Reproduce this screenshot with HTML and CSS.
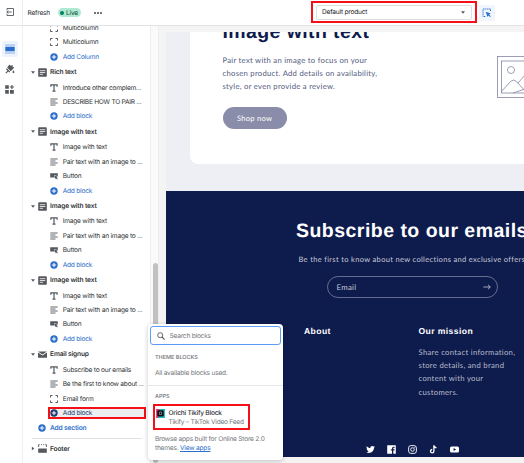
FILE: index.html
```
<!DOCTYPE html>
<html lang="en">
<head>
<meta charset="utf-8">
<title>Theme editor</title>
<link rel="stylesheet" href="styles.css">
</head>
<body>
<svg class="defs" width="0" height="0">
  <symbol id="corners" viewBox="0 0 8 8"><path d="M.5 2.500v-2h2M5.500 .5h2v2M7.500 5.500v2h-2M2.500 7.500h-2v-2" fill="none" stroke="#55585c"/></symbol>
  <symbol id="plus" viewBox="0 0 8 8"><circle cx="4" cy="4" r="3.700" fill="currentColor"/><path d="M4 1.900v4.200M1.900 4h4.200" stroke="#fff" stroke-width="1"/></symbol>
  <symbol id="title" viewBox="0 0 8 8"><path d="M.9 2.700V.9h6.200v1.800M4 .9v6.300M2.500 7.200h3" fill="none" stroke="#55585c" stroke-width="1.200"/></symbol>
  <symbol id="lines" viewBox="0 0 8 8"><path d="M.3 1h7.400M.3 3h5.200M.3 5h7.400M.3 7h5.200" stroke="#55585c" stroke-width=".9"/></symbol>
  <symbol id="button" viewBox="0 0 8 8"><path d="M.2 1.300h7.600v2.900L4.200 2.900l.6 2.700H.2z" fill="#55585c"/><path d="M4.600 3.600l3.300 1.200-1.200.7 1.100 1.300-.7.7-1.200-1.200-.6 1z" fill="#55585c"/></symbol>
  <symbol id="section" viewBox="0 0 9 9"><rect x=".2" y=".2" width="8.600" height="8.600" rx=".9" fill="#55585c"/><path d="M1.800 2.700h5.400M1.800 4.500h5.400M1.800 6.300h3.200" stroke="#fff" stroke-width=".8"/></symbol>
  <symbol id="mail" viewBox="0 0 9 9"><path d="M0 1.500h9L4.500 4.600z M0 2.400l4.500 3.100L9 2.400V7.700H0z" fill="#55585c"/></symbol>
  <symbol id="footer" viewBox="0 0 9 9"><path d="M.6 3V.6h1M3 .6h1M5.200 .6h1M7.400 .6h1V3" fill="none" stroke="#55585c" stroke-width=".9"/><path d="M.2 4.500h8.600V8.800H.2z" fill="#55585c"/></symbol>
  <symbol id="down" viewBox="0 0 4 3"><path d="M0 .2h4L2 2.800z" fill="#55585c"/></symbol>
</svg>

<header class="topbar">
  <div class="exit"><svg width="8" height="8" viewBox="0 0 8 8"><path d="M1 2.200V.5h6.500v7H1V5.800M5.700 4H.7M2.400 2.500L.8 4l1.600 1.500" fill="none" stroke="#55585c" stroke-width=".9"/></svg></div>
  <span class="theme">Refresh</span>
  <span class="live"><i></i>Live</span>
  <span class="more"><i></i><i></i><i></i></span>
  <div class="picker"><div class="select"><span>Default product</span><svg width="4" height="3"><use href="#down"/></svg></div></div>
  <div class="inspect"><svg width="10" height="10" viewBox="0 0 10 10"><path d="M8.500 3V1H1v7.500h2.500" fill="none" stroke="#2c6ecb" stroke-dasharray="1.300 .7"/><path d="M3.800 3.800l5 1.800-1.700 1 1.700 1.700-.8.8-1.700-1.700-.9 1.600z" fill="#2c6ecb"/></svg></div>
</header>

<div class="workspace">
  <nav class="rail">
    <div class="tool active"><svg width="10" height="10" viewBox="0 0 10 10"><path d="M.5 1h9M.5 9h9" stroke="#2c6ecb" stroke-width="1.100" stroke-dasharray="1 1"/><path d="M.3 2.700h9.400v4.600H.3z" fill="#2c6ecb"/></svg></div>
    <div class="tool"><svg width="10" height="10" viewBox="0 0 10 10"><path d="M4.400 .4l1.200 1.400L7.800.9l-.3 2 1.900.7-3.700 3.700L2.200 3.500zM1.700 4.100l3.500 3.600-1 .8-1-1L1.300 9.500.4 8.700l2-1.900-1.200-1.400zM8.300 6.200c1 1.300 1.300 2 .9 2.600-.5.500-1.600.3-1.700-.6 0-.6.400-1.200.8-2z" fill="#55585c"/></svg></div>
    <div class="tool"><svg width="9" height="9" viewBox="0 0 9 9"><path d="M.2 .2h3.600v3.600H.2zM.2 5h3.600v3.800H.2zM5 5h3.800v3.800H5zM6.300 0h1.200v1.400H9v1.200H7.500V4H6.300V2.600H4.800V1.400h1.500z" fill="#55585c"/></svg></div>
  </nav>

  <aside class="sidebar">
    <div class="tree">
      <div class="row"><svg><use href="#corners"/></svg><span>Multicolumn</span></div>
      <div class="row"><svg><use href="#corners"/></svg><span>Multicolumn</span></div>
      <div class="row add"><svg><use href="#plus"/></svg><span>Add Column</span></div>

      <div class="head"><svg class="caret"><use href="#down"/></svg><svg><use href="#section"/></svg><span>Rich text</span></div>
      <div class="row"><svg><use href="#title"/></svg><span>Introduce other complem...</span></div>
      <div class="row caps"><svg><use href="#lines"/></svg><span>DESCRIBE HOW TO PAIR ...</span></div>
      <div class="row add"><svg><use href="#plus"/></svg><span>Add block</span></div>

      <div class="head"><svg class="caret"><use href="#down"/></svg><svg><use href="#section"/></svg><span>Image with text</span></div>
      <div class="row"><svg><use href="#title"/></svg><span>Image with text</span></div>
      <div class="row"><svg><use href="#lines"/></svg><span>Pair text with an image to ...</span></div>
      <div class="row"><svg><use href="#button"/></svg><span>Button</span></div>
      <div class="row add"><svg><use href="#plus"/></svg><span>Add block</span></div>

      <div class="head"><svg class="caret"><use href="#down"/></svg><svg><use href="#section"/></svg><span>Image with text</span></div>
      <div class="row"><svg><use href="#title"/></svg><span>Image with text</span></div>
      <div class="row"><svg><use href="#lines"/></svg><span>Pair text with an image to ...</span></div>
      <div class="row"><svg><use href="#button"/></svg><span>Button</span></div>
      <div class="row add"><svg><use href="#plus"/></svg><span>Add block</span></div>

      <div class="head"><svg class="caret"><use href="#down"/></svg><svg><use href="#section"/></svg><span>Image with text</span></div>
      <div class="row"><svg><use href="#title"/></svg><span>Image with text</span></div>
      <div class="row"><svg><use href="#lines"/></svg><span>Pair text with an image to ...</span></div>
      <div class="row"><svg><use href="#button"/></svg><span>Button</span></div>
      <div class="row add"><svg><use href="#plus"/></svg><span>Add block</span></div>

      <div class="head"><svg class="caret"><use href="#down"/></svg><svg><use href="#mail"/></svg><span>Email signup</span></div>
      <div class="row"><svg><use href="#title"/></svg><span>Subscribe to our emails</span></div>
      <div class="row"><svg><use href="#lines"/></svg><span>Be the first to know about ...</span></div>
      <div class="row"><svg><use href="#corners"/></svg><span>Email form</span></div>
      <div class="row add selected"><svg><use href="#plus"/></svg><span>Add block</span></div>
      <div class="head add-section"><svg><use href="#plus"/></svg><span>Add section</span></div>
      <hr>
      <div class="head"><svg class="caret closed"><use href="#down"/></svg><svg><use href="#footer"/></svg><span>Footer</span></div>
    </div>
  </aside>
  <div class="scrollbar"><div class="thumb"></div></div>

  <main class="stage">
    <div class="preview">
      <section class="feature">
        <div class="card">
          <div class="copy">
            <h2>Image with text</h2>
            <p>Pair text with an image to focus on your<br>chosen product. Add details on availability,<br>style, or even provide a review.</p>
            <span class="shop">Shop now</span>
          </div>
          <svg class="placeholder" width="60" height="42" viewBox="0 0 60 42"><g fill="none" stroke="#8286a3" stroke-width=".8"><rect x=".5" y=".5" width="58" height="41"/><rect x="4.500" y="5" width="50" height="32"/><circle cx="14" cy="14" r="3.500"/><path d="M4.500 35.500l9-10q3-3 6 0l9 10M21 27l7-8q3-2 6 0l14 16M16 37l12-4"/></g></svg>
        </div>
      </section>
      <section class="signup">
        <h1>Subscribe to our emails</h1>
        <p>Be the first to know about new collections and exclusive offers.</p>
        <div class="email"><span>Email</span><svg width="8" height="6" viewBox="0 0 8 6"><path d="M.3 3h6.900M5 .8L7.300 3 5 5.200" fill="none" stroke="#c7c9d6" stroke-width=".8"/></svg></div>
      </section>
      <footer class="site-footer">
        <div class="columns">
          <div><h3>About</h3></div>
          <div><h3>Our mission</h3><p>Share contact information,<br>store details, and brand<br>content with your<br>customers.</p></div>
        </div>
        <div class="social">
          <svg width="9" height="9" viewBox="0 0 9 9"><path d="M.3 7.300c1 0 1.800-.2 2.500-.8C2 6.400 1.400 6 1.200 5.300h.8C1.100 5 .6 4.400.6 3.500l.7.200C.5 3.100.3 2.200.8 1.300c1 1.100 2.100 1.700 3.600 1.800C4.200 2 4.900 1 6.100 1c.6 0 1 .2 1.300.5l1.200-.4-.7.900L9 1.800l-1 1c0 3.600-3.800 6.600-7.700 4.500z" fill="#fff"/></svg>
          <svg width="9" height="9" viewBox="0 0 9 9"><path d="M.2 .2h8.600v8.600H6.300V5.600h1.100l.2-1.300H6.300v-.8c0-.4.200-.7.700-.7h.7V1.700c-1.700-.3-2.700.4-2.700 1.800v.8H3.900v1.300H5v3.200H.2z" fill="#fff"/></svg>
          <svg width="9" height="9" viewBox="0 0 9 9"><g fill="none" stroke="#fff" stroke-width=".9"><rect x=".6" y=".6" width="7.800" height="7.800" rx="2.300"/><circle cx="4.500" cy="4.500" r="1.800"/></g><circle cx="6.800" cy="2.200" r=".5" fill="#fff"/></svg>
          <svg width="9" height="9" viewBox="0 0 9 9"><path d="M4.900 .3v5.900a1.700 1.700 0 1 1-1.700-1.700M4.900 .3c.2 1.500 1 2.300 2.600 2.400" fill="none" stroke="#fff" stroke-width="1.300"/></svg>
          <svg width="9" height="9" viewBox="0 0 9 9"><path fill-rule="evenodd" d="M1.500 1.400h6Q9 1.400 9 2.900v3.200q0 1.500-1.500 1.500h-6Q0 7.600 0 6.100V2.900q0-1.500 1.500-1.500zM3.600 3v3l2.500-1.500z" fill="#fff"/></svg>
        </div>
      </footer>
    </div>
  </main>
</div>

<div class="popover">
  <div class="search"><svg width="8" height="8" viewBox="0 0 8 8"><circle cx="3.200" cy="3.200" r="2.500" fill="none" stroke="#55585c" stroke-width=".9"/><path d="M5 5l2.600 2.600" stroke="#55585c" stroke-width="1.100"/></svg><span>Search blocks</span></div>
  <div class="label">THEME BLOCKS</div>
  <div class="note">All available blocks used.</div>
  <div class="apps">
    <div class="label">APPS</div>
    <div class="app">
      <svg width="9" height="9" viewBox="0 0 9 9"><path d="M0 0h5v9H0z" fill="#e8457f"/><path d="M4 0h5v9H2z" fill="#27bfc6"/><rect x="1.300" y="1.200" width="6.400" height="6.400" rx=".8" fill="#080a10"/><path d="M3.400 3h2.200v2.600H3.400z" fill="none" stroke="#bbb" stroke-width=".6"/></svg>
      <div><div class="name">Orichi Tikify Block</div><div class="vendor">Tikify – TikTok Video Feed</div></div>
    </div>
    <p>Browse apps built for Online Store 2.0<br>themes. <a>View apps</a></p>
  </div>
</div>
</body>
</html>
```

FILE: styles.css
```
* { box-sizing: border-box; }
body {
  margin: 0; width: 524px; height: 463px; overflow: hidden; position: relative;
  display: flex; flex-direction: column; background: #fff; color: #303235;
  font: 6.600px "Inter", sans-serif; letter-spacing: -.22px; text-rendering: geometricPrecision;
}
svg { display: block; flex: none; }
.defs { position: absolute; }
h1, h2, h3, p { margin: 0; }

.topbar { height: 26px; flex: none; display: flex; align-items: center; border-bottom: 1px solid #e1e3e5; white-space: nowrap; }
.exit { width: 23px; height: 25px; padding: 8px 0 0 6px; border-right: 1px solid #ececee; }
.theme { width: 30px; margin-left: 4.500px; }
.live { width: 23px; height: 9px; display: flex; align-items: center; gap: 2px; padding-left: 2.500px; border-radius: 5px; background: #aee9d1; color: #20453a; }
.live i { width: 4px; height: 4px; border-radius: 50%; background: #008060; }
.more { display: flex; gap: 1px; margin-left: 13px; width: 217.500px; }
.more i { width: 2px; height: 2px; border-radius: 50%; background: #44474a; }
.picker { width: 166px; height: 22px; margin-top: -1px; border: 2px solid #f41018; padding: 1.500px 3px; }
.select { height: 15px; border: 1px solid #dcdee0; border-radius: 2px; display: flex; align-items: center; justify-content: space-between; padding: 0 6px 0 5px; color: #202223; }
.inspect { width: 16px; height: 16px; margin-left: 2px; background: #f1f6fd; border-radius: 2px; padding: 3px; }

.workspace { flex: 1; min-height: 0; display: flex; }
.rail { width: 23px; flex: none; border-right: 1px solid #f0f0f1; padding: 15px 0 0 1.500px; display: flex; flex-direction: column; gap: 4px; }
.tool { width: 16px; height: 16px; border-radius: 2px; display: grid; place-items: center; }
.tool.active { background: #edf4fe; }

.sidebar { width: 127px; flex: none; overflow: hidden; white-space: nowrap; }
.tree { margin-top: -5.400px; }
.row { height: 14.400px; display: flex; align-items: center; gap: 4.500px; padding-left: 27.200px; }
.row svg { width: 8px; height: 8px; }
.caps { letter-spacing: -.27px; }
.add { color: #2c6ecb; }
.head { height: 16.600px; display: flex; align-items: center; gap: 3.200px; padding-left: 7.700px; font-weight: 600; letter-spacing: -.15px; color: #303235; }
.head svg { width: 9px; height: 9px; }
.head .caret { width: 4px; height: 3px; }
.head .caret.closed { transform: rotate(-90deg); }
.selected { width: 98px; margin-left: 24.500px; height: 12.500px; margin-top: 1px; border: 2px solid #f41018; background: #edeef0; color: #1f3b70; padding-left: .8px; }
.add-section { padding-left: 15px; margin-top: 1px; gap: 4px; height: 16px; color: #2c6ecb; }
.add-section svg { width: 8px; height: 8px; }
hr { height: 1px; border: 0; margin: 1.500px 0 1.500px 9px; width: 110px; background: #e1e3e5; }

.scrollbar { width: 9px; flex: none; background: #fafafa; border: solid #eee; border-width: 0 1px; padding: 237px 0 0 2px; }
.thumb { width: 5px; height: 200px; border-radius: 3px; background: #c1c1c1; }

.stage { flex: 1; min-width: 0; background: #f4f4f4; padding: 5.500px 0 6.500px 7px; }
.preview { height: 425px; overflow: hidden; font-family: "Lato", sans-serif; background: #0e1b4d; }
.feature { height: 159.500px; background: #eeeff5; padding-left: 24px; overflow: hidden; }
.card { width: 400px; height: 132px; background: #fff; border-radius: 0 0 0 8px; display: flex; }
.copy { width: 307px; padding-left: 32.500px; white-space: nowrap; color: #515a80; }
.copy h2 { font: bold 19.500px/24px "Liberation Sans", sans-serif; color: #0e1b4d; margin-top: -12px; letter-spacing: .4px; }
.copy p { margin-top: 10px; font-size: 7.700px; line-height: 13.400px; letter-spacing: .27px; }
.shop { display: grid; place-items: center; width: 64px; height: 22px; margin-top: 13.500px; border-radius: 11px; background: #898da9; color: #fff; font-size: 7.600px; letter-spacing: .25px; }
.placeholder { margin-top: 24px; }

.signup { height: 117px; padding-top: 26.500px; display: flex; flex-direction: column; align-items: flex-start; color: #c7c9d6; white-space: nowrap; }
.signup h1 { font: bold 19.500px/26px "Liberation Sans", sans-serif; color: #fff; letter-spacing: .47px; margin-left: 130px; }
.signup p { font-size: 7.500px; line-height: 12px; letter-spacing: .33px; margin: 10px 0 0 132.500px; }
.email { width: 171px; height: 22px; margin: 10.500px 0 0 161px; border: 1px solid #656d8e; border-radius: 11px; display: flex; align-items: center; justify-content: space-between; padding: 0 6px 0 8.500px; font-size: 7.800px; letter-spacing: .3px; }

.site-footer { padding-left: 138px; color: #b7bbc9; }
.columns { display: grid; grid-template-columns: 114.500px 1fr; padding-top: 17px; height: 137px; white-space: nowrap; }
.columns h3 { font: bold 8.600px/12px "Liberation Sans", sans-serif; letter-spacing: .4px; color: #fff; }
.columns p { margin-top: 8.500px; font-size: 7.700px; line-height: 13.400px; letter-spacing: .3px; }
.social { display: flex; gap: 12px; padding-left: 62px; }

.popover { position: absolute; left: 148px; top: 324px; width: 135px; height: 136px; border-radius: 4px; background: #fff; box-shadow: 0 1px 5px rgba(0, 0, 0, .22); color: #75797d; white-space: nowrap; }
.search { width: 131px; height: 19px; margin: 2px; border: 1.500px solid #5c9cf5; border-radius: 3px; display: flex; align-items: center; gap: 4.500px; padding-left: 6px; }
.label { margin: 10px 0 0 7px; font-size: 5.500px; line-height: 7px; font-weight: 500; letter-spacing: 0; color: #6d7175; }
.note { margin: 7px 0 0 7px; line-height: 9px; }
.apps { margin-top: 7px; border-top: 1px solid #e5e6e8; }
.apps .label { margin-top: 8px; }
.app { width: 97px; height: 26px; margin: 3px 0 0 5px; border: 2px solid #f41018; display: flex; gap: 3.500px; padding: 3px 0 0 1px; line-height: 9px; }
.name { font-weight: 500; color: #303235; }
.vendor { letter-spacing: -.25px; }
.apps p { margin: 5px 0 0 7px; line-height: 9px; }
a { color: #2c6ecb; text-decoration: underline; }
```
